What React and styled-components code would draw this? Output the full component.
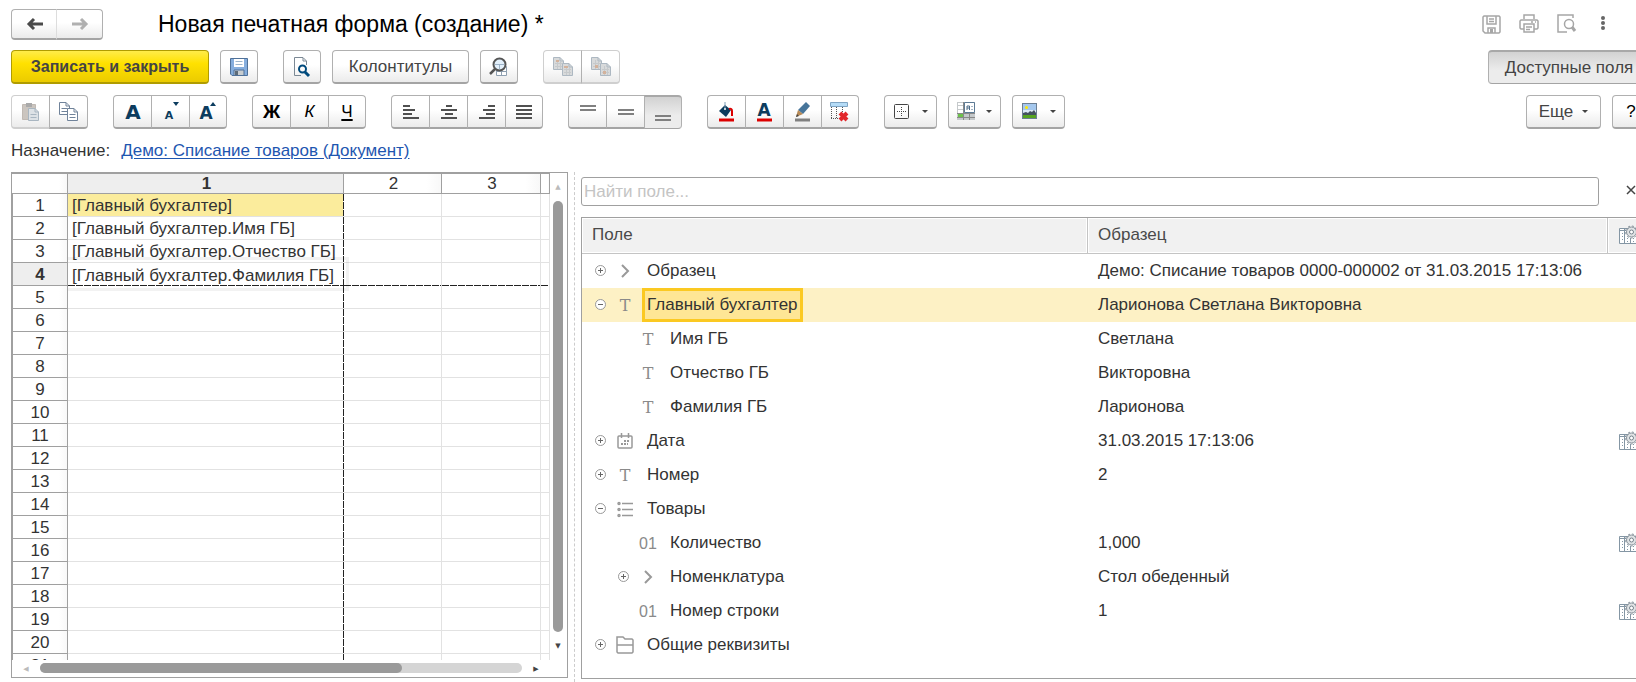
import React, { useState } from 'react';
import styled, { createGlobalStyle, css } from 'styled-components';

const GlobalStyle = createGlobalStyle`
  * { box-sizing: border-box; }
  html, body { margin: 0; background: #fff; overflow: hidden; }
  body, button, input, table {
    font-family: "Liberation Sans", Arial, sans-serif;
    font-size: 17px;
    color: #333;
  }
`;

const Page = styled.div`
  display: flex;
  flex-direction: column;
  width: calc(100% + 25px);
  height: 100vh;
  padding: 9px 11px 0;
`;

const Header = styled.header`
  display: flex;
  align-items: center;
  height: 30px;
  margin-bottom: 11px;
`;

const Title = styled.h1`
  flex: 1;
  margin: 0 0 0 55px;
  font-size: 23px;
  font-weight: 400;
  color: #000;
`;

const HeaderIcons = styled.div`
  display: flex;
  align-items: center;
  gap: 18px;
  margin-right: 38px;
`;

const IconButton = styled.button`
  display: flex;
  padding: 0;
  border: 0;
  background: none;
`;

const Toolbar = styled.div`
  display: flex;
  gap: 25px;
  height: 34px;
  margin-bottom: 11px;
`;

const Cluster = styled.div`
  display: flex;
  gap: 11px;
`;

const Spacer = styled.div`
  flex: 1;
`;

const Button = styled.button`
  display: flex;
  align-items: center;
  justify-content: center;
  gap: ${p => p.$gap || 0}px;
  width: ${p => p.$w || 38}px;
  height: 100%;
  padding: 0;
  border: 1px solid #b0b0b0;
  border-bottom: 2px solid #a4a4a4;
  border-radius: 4px;
  background: linear-gradient(#fff 45%, #ebebeb);
  color: #444;
  white-space: nowrap;

  ${p => p.$primary && css`
    border-color: #b09c00;
    background: linear-gradient(#ffec4a, #ffe100 40%, #ebcb00);
    font-size: 16px;
    font-weight: 700;
  `}

  ${p => p.$pressed && css`
    border-top: 2px solid #a8a8a8;
    border-bottom-width: 1px;
    background: linear-gradient(#d2d2d2, #ececec 60%);
  `}

  &:disabled {
    border-color: #cfcfcf;
  }
`;

const Group = styled.div`
  display: flex;

  ${Button} { width: 39px; border-radius: 0; }
  ${Button} + ${Button} { border-left: 1px solid #b0b0b0; margin-left: -1px; }
  ${Button}:first-child { border-radius: 4px 0 0 4px; }
  ${Button}:last-child { border-radius: 0 4px 4px 0; }
  ${Button}:nth-child(n+3):last-child { width: 38px; }
`;

const NavGroup = styled(Group)`
  height: 31px;
  ${Button}:first-child { width: 46px; border-right-width: 0; }
  ${Button}:last-child { width: 47px; border-left-color: #ddd; }
`;

const Letter = styled.span`
  font-size: ${p => p.$size || 19}px;
  line-height: 20px;
  color: ${p => p.$color || '#000'};
  font-weight: ${p => (p.$bold ? 700 : 400)};
  font-style: ${p => (p.$italic ? 'italic' : 'normal')};
  text-decoration: ${p => (p.$underline ? 'underline' : 'none')};
  text-decoration-thickness: 2px;
  text-underline-offset: 2px;
`;

const Purpose = styled.div`
  display: flex;
  gap: 11px;
  height: 32px;
  line-height: 22px;

  a { color: #1e56b0; text-underline-offset: 2px; }
`;

const Workspace = styled.main`
  display: flex;
  flex: 1;
  min-height: 0;
`;

const Sheet = styled.section`
  display: grid;
  grid-template: minmax(0, 1fr) 17px / minmax(0, 1fr) 17px;
  flex: 0 0 557px;
  margin-bottom: 4px;
  border: 1px solid #a0a0a0;
`;

const SheetView = styled.div`
  overflow: hidden;
`;

const SheetTable = styled.table`
  width: 100%;
  table-layout: fixed;
  border-collapse: separate;
  border-spacing: 0;
`;

const HeadCell = styled.th`
  height: ${p => (p.$top ? 21 : 23)}px;
  padding: 2px 0 0 ${p => (p.$top ? 2 : 1)}px;
  border-right: 1px solid #a0a0a0;
  border-bottom: 1px solid #a0a0a0;
  box-shadow: inset ${p => (p.$top ? '0 1px' : '1px 0')} 0 #a0a0a0;
  background: ${p => (p.$active ? '#eee' : 'linear-gradient(90deg, #fff 85%, #f8f8f8)')};
  font-weight: ${p => (p.$active ? 700 : 400)};
  line-height: ${p => (p.$top ? 18 : 20)}px;
  text-align: center;
`;

const dashes = dir => `repeating-linear-gradient(${dir}, #222 0 7px, #fff 7px 8px)`;

const Cell = styled.td`
  position: relative;
  height: 23px;
  padding: 2px 0 0 4px;
  border-right: 1px solid #e2e2e2;
  border-bottom: 1px solid #e2e2e2;
  line-height: 20px;
  white-space: nowrap;
  background-color: ${p => (p.$fill ? '#fbec9c' : '#fff')};
  background-repeat: no-repeat;

  ${p => p.$right && css`
    border-right: 0;
    background-image: ${dashes('180deg')};
    background-position: right top;
    background-size: 1px 100%;
  `}
  ${p => p.$bottom && css`
    border-bottom: 0;
    background-image: ${dashes('90deg')};
    background-position: left bottom;
    background-size: 100% 1px;
  `}
  ${p => p.$right && p.$bottom && css`
    background-image: ${dashes('180deg')}, ${dashes('90deg')};
    background-position: right top, left bottom;
    background-size: 1px 100%, 100% 1px;
  `}
`;

// halo round the current cell
const Halo = styled.span`
  position: absolute;
  z-index: 1;
  inset: -6px -5px -5px 0;
  border: 3px solid rgba(0, 0, 0, 0.05);
  border-left: 0;
  pointer-events: none;
`;

const VScroll = styled.div`
  display: flex;
  flex-direction: column;
  align-items: center;
  padding-right: 1px;
`;

const HScroll = styled.div`
  display: flex;
  align-items: center;
`;

const ScrollArrow = styled.button`
  flex: 0 0 28px;
  width: 16px;
  height: 28px;
  padding: 0;
  border: 0;
  background: none;
  font: 7px "DejaVu Sans", sans-serif;
  color: ${p => (p.$dim ? '#bbb' : '#444')};
`;

const HArrow = styled(ScrollArrow)`
  height: 17px;
`;

const VThumb = styled.div`
  flex: 1;
  width: 10px;
  border-radius: 5px;
  background: #9a9a9a;
`;

const HTrack = styled.div`
  flex: 1;
  height: 10px;
  margin-bottom: 2px;
  border-radius: 5px;
  background: #d5d5d5;
`;

const HThumb = styled.div`
  width: 75%;
  height: 100%;
  border-radius: 5px;
  background: #9a9a9a;
`;

const Splitter = styled.div`
  flex: 0 0 13px;
  margin-left: 6px;
  margin-right: -6px;
  border-left: 1px dashed #ccc;
`;

const Fields = styled.section`
  display: flex;
  flex-direction: column;
  flex: 1;
  min-width: 0;
  padding: 5px 0 3px;
`;

const SearchRow = styled.div`
  display: flex;
  align-items: center;
  height: 29px;
  margin-bottom: 11px;
`;

const SearchInput = styled.input`
  flex: 1;
  height: 29px;
  padding: 0 2px;
  border: 1px solid #a0a0a0;
  border-radius: 3px;
  outline: 0;

  &::placeholder { color: #c4c4c4; opacity: 1; }
`;

const ClearButton = styled(IconButton)`
  justify-content: center;
  width: 51px;
  padding: 0 0 4px 13px;
`;

const FieldFrame = styled.div`
  flex: 1;
  border: 1px solid #a0a0a0;
`;

const FieldTable = styled.table`
  width: 100%;
  table-layout: fixed;
  border-collapse: separate;
  border-spacing: 0;
`;

const FieldHead = styled.th`
  height: 36px;
  padding: 0 0 1px 10px;
  border: solid #c4c4c4;
  border-width: 0 1px 1px 0;
  box-shadow: inset 0 0 0 1px #fff;
  background: #f1f1f1;
  font-weight: 400;
  color: #4a4a4a;
  text-align: left;

  svg { display: block; }
`;

const FieldRow = styled.tr`
  background: ${p => (p.$selected ? '#fdf1c5' : 'none')};
`;

const FieldCell = styled.td`
  height: 34px;
  padding: 0 0 0 10px;
  white-space: nowrap;

  > svg { display: block; }
`;

const TreeCell = styled.div`
  display: flex;
  align-items: center;
  height: 34px;
  padding-left: ${p => 2 + p.$level * 23}px;
`;

const Expander = styled(IconButton)`
  flex: 0 0 12px;
  margin-right: 8px;
`;

const NoExpander = styled.span`
  flex: 0 0 20px;
`;

const KindIcon = styled.span`
  display: flex;
  justify-content: center;
  flex: 0 0 22px;
  margin-right: 6px;
  color: #8a8a8a;
`;

const KindText = styled.span`
  padding-top: 2px;
  font: ${p => (p.$serif ? '16px "DejaVu Serif", serif' : '16px "Liberation Sans Narrow", "Liberation Sans", sans-serif')};
  line-height: 20px;
`;

const FieldName = styled.span`
  display: flex;
  align-items: center;
  height: 34px;
  padding: 0 2px;
  border: 3px solid ${p => (p.$selected ? '#fbc922' : 'transparent')};
  background: ${p => (p.$selected ? '#fee695' : 'none')};
`;

/* ---- icons ---- */

const Svg = ({ w = 20, h = 20, children, ...rest }) => (
  <svg width={w} height={h} viewBox={`0 0 ${w} ${h}`} fill="none" overflow="visible" aria-hidden="true" {...rest}>{children}</svg>
);

const ArrowIcon = ({ color, right }) => (
  <Svg w={18} h={14} stroke={color} strokeWidth="3">
    {right ? <path d="M1 7H14M10 2L15 7L10 12" /> : <path d="M17 7H4M8 2L3 7L8 12" />}
  </Svg>
);

const FloppyIcon = () => (
  <Svg w={18} h={18}>
    <path d="M.5.5H17.5V17.5H2L.5 16Z" fill="#86aede" stroke="#4f7199" />
    <path d="M4 1H14V9H4Z" fill="#fff" />
    <path d="M5.500 3.500H12.500M5.500 6.500H12.500" stroke="#9db5cc" />
    <path d="M4 12H14V17.500H4Z" fill="#c8cdd0" stroke="#4f7199" />
    <path d="M5 13H8V17H5Z" fill="#5d6b78" />
  </Svg>
);

const PreviewIcon = () => (
  <Svg w={18} h={20}>
    <path d="M8 18.500H1.500V.500H10L13.500 4V8" stroke="#7b8894" />
    <path d="M10 1V4H13" stroke="#7b8894" />
    <circle cx="9.500" cy="12" r="3.500" stroke="#004a7c" strokeWidth="2" />
    <path d="M12 15L16 19" stroke="#004a7c" strokeWidth="3" />
  </Svg>
);

const FindTableIcon = () => (
  <Svg w={20} h={20}>
    <path d="M7.500 9.500H17.500V18.500H7.500ZM12.500 9V18M7 14.500H18" fill="#fff" stroke="#8fa0b1" />
    <circle cx="10.500" cy="7.500" r="6" fill="#e3f0fb" stroke="#555" strokeWidth="2" />
    <path d="M6 7.500H15M10.500 7V12" stroke="#9db3c8" />
    <path d="M6 12L1 17" stroke="#555" strokeWidth="2.500" />
  </Svg>
);

const Doc = ({ x, y, stroke, fill, lines = true }) => (
  <g transform={`translate(${x} ${y})`}>
    <path d="M.5.5H7L10.500 4V12.500H.5Z" fill={fill} stroke={stroke} />
    <path d="M7 .500V4H10.500" stroke={stroke} />
    {lines && <path d="M2.500 6.500H8.500M2.500 9.500H8.500" stroke={stroke} />}
  </g>
);

const PasteIcon = () => (
  <Svg w={18} h={20}>
    <path d="M.5 2.500H13.500V17.500H.5Z" fill="#cbc5bf" stroke="#c0b9b3" />
    <path d="M4 1H10V5H4Z" fill="#aaa" />
    <Doc x={6} y={6} stroke="#a9b6c1" fill="#dde2e6" />
  </Svg>
);

const CopyIcon = () => (
  <Svg w={20} h={20}>
    <Doc x={0} y={0} stroke="#70839a" fill="#fff" />
    <Doc x={8} y={6} stroke="#70839a" fill="#fff" />
  </Svg>
);

const CopyAreaIcon = ({ low }) => (
  <Svg w={20} h={20}>
    <Doc x={0} y={0} stroke="#adb8c2" fill="#d8dadb" lines={false} />
    <path d="M2 6.500H9M2 9.500H9M4.500 3V12M7.500 5V12" stroke="#c6c9cb" />
    <Doc x={9} y={6} stroke="#adb8c2" fill="#d8dadb" lines={false} />
    <path d="M11 12.500H18M11 15.500H18M13.500 9V18M16.500 11V18" stroke="#c6c9cb" />
    {low
      ? <path d="M4 8H7V11H4ZM12 14H15V17H12Z" fill="#d3b29c" />
      : <path d="M3 3H6V5H3ZM11 9H15V11H11Z" fill="#d3b29c" />}
  </Svg>
);

const AIcon = ({ size, mark }) => (
  <Svg w={18} h={20}>
    <text x={mark ? 7 : 9} y="17" textAnchor="middle" fontFamily="DejaVu Sans, sans-serif" fontWeight="700" fontSize={size} fill="#0c3c5e">A</text>
    {mark === 'down' && <path d="M11 0H17L14 4Z" fill="#0c3c5e" />}
    {mark === 'up' && <path d="M11 4H17L14 0Z" fill="#0c3c5e" />}
  </Svg>
);

const aligns = {
  left: 'M0 2H7M0 6H12M0 10H9M0 14H16',
  center: 'M5 2H11M0 6H16M4 10H12M0 14H16',
  right: 'M9 2H16M4 6H16M7 10H16M0 14H16',
  justify: 'M0 2H16M0 6H16M0 10H16M0 14H16',
};
const AlignIcon = ({ kind }) => <Svg w={16} h={16} stroke="#505050" strokeWidth="2"><path d={aligns[kind]} /></Svg>;

const VAlignIcon = ({ y }) => <Svg w={16} h={20} stroke="#808080" strokeWidth="2"><path d={`M0 ${y}H16M0 ${y + 4}H16`} /></Svg>;

const FillIcon = () => (
  <Svg w={18} h={20}>
    <path d="M1 9L7 3L13 8L8 15Z" fill="#0c3c5e" />
    <path d="M7 0V6" stroke="#7f9db5" strokeWidth="1" />
    <circle cx="7" cy="7" r="1" fill="#fff" />
    <path d="M11 7Q14 6 14 9V14" stroke="#dc0000" strokeWidth="2" />
    <path d="M1 18H16" stroke="#dc0000" strokeWidth="3" />
  </Svg>
);

const TextColorIcon = () => (
  <Svg w={18} h={20}>
    <text x="8" y="14" textAnchor="middle" fontFamily="DejaVu Sans, sans-serif" fontWeight="700" fontSize="17" fill="#0c3c5e">A</text>
    <path d="M1 18H16" stroke="#dc0000" strokeWidth="3" />
  </Svg>
);

const PencilIcon = () => (
  <Svg w={18} h={20}>
    <path d="M12 0L16 4L9 12L4 8Z" fill="#47759a" />
    <path d="M4 8L9 12L2 15Z" fill="#b88a56" />
    <path d="M3 12L5 14L2 15Z" fill="#444" />
    <path d="M1 18H16" stroke="#808080" strokeWidth="3" />
  </Svg>
);

const ClearFormatIcon = () => (
  <Svg w={20} h={20}>
    <path d="M.5.5H17.500V4.500H.5Z" fill="#b5dcf7" stroke="#7fa5c4" />
    <path d="M1.500 5V17M6.500 5V17M12.500 5V10M1 16.500H9" stroke="#555" strokeDasharray="1 1" />
    <path d="M10 11L17 18M17 11L10 18" stroke="#e2282c" strokeWidth="4" />
  </Svg>
);

const BordersIcon = () => (
  <Svg w={16} h={16}>
    <rect x=".5" y=".5" width="14" height="14" rx="1" stroke="#444" />
    <path d="M7.500 3V13M3 7.500H13" stroke="#444" strokeDasharray="1 1" />
  </Svg>
);

const NamesIcon = () => (
  <Svg w={20} h={19}>
    <path d="M0 0H18V18H0Z" fill="#c5c9cb" />
    <path d="M1 1H6V3H1ZM1 4H6V7H1ZM1 8H6V11H1Z" fill="#fff" />
    <path d="M1 12H6V15H1Z" fill="#6cc04a" />
    <path d="M0 11.500H18M6.500 0V18M12.500 11V18M0 15.500H18" stroke="#888" />
    <path d="M7.500.5H17.500V10.500H7.500Z" fill="#fff" stroke="#5c7a94" />
    <path d="M10 8V4H12.500V8M10 6H12M15 4V5M15 7V8" stroke="#4b6a86" />
  </Svg>
);

const ImageIcon = () => (
  <Svg w={16} h={17}>
    <rect x=".5" y=".5" width="14" height="15" fill="#a5c8ee" stroke="#6c7f93" />
    <path d="M1 7H14V12H1Z" fill="#dbe9f6" />
    <circle cx="4.500" cy="4.500" r="1.500" fill="#ffe900" />
    <path d="M1 12V10L4 9L6 10L8 8L10 9L12 7L14 10V12Z" fill="#44525f" />
    <path d="M1 12H14V15H1Z" fill="#56a420" />
  </Svg>
);

const Caret = () => <Svg w={6} h={4}><path d="M0 0H6L3 3Z" fill="#444" /></Svg>;

const GreyFloppyIcon = () => (
  <Svg w={19} h={19} stroke="#a6a6a6" strokeWidth="1.500">
    <path d="M1 2L2 1H17L18 2V17L17 18H3L1 16Z" />
    <path d="M5 1V9H14V1M7 4H12M7 6.500H12M6 18V13H13V18" />
    <path d="M9.500 14V18" strokeWidth="3" />
  </Svg>
);

const PrinterIcon = () => (
  <Svg w={20} h={20} stroke="#a6a6a6" strokeWidth="1.500">
    <path d="M5 5V1H15V5M5 15H2L1 14V7L2 6H18L19 7V14L18 15H15" />
    <path d="M5 10H15V18H5ZM7 13H13M7 15.500H11M12 8H14M16 8H17" />
  </Svg>
);

const GreyPreviewIcon = () => (
  <Svg w={19} h={20} stroke="#a6a6a6" strokeWidth="1.500">
    <path d="M10 18H1V1H16V4" />
    <circle cx="12" cy="10" r="4.500" />
    <path d="M15 13L18 17" strokeWidth="3" />
  </Svg>
);

const MoreIcon = () => (
  <Svg w={18} h={16} fill="#666">
    <circle cx="9" cy="2" r="2" fill="#666" /><circle cx="9" cy="7" r="2" fill="#666" /><circle cx="9" cy="12" r="2" fill="#666" />
  </Svg>
);

const ExpanderIcon = ({ open }) => (
  <Svg w={12} h={12} stroke="#999">
    <circle cx="6.500" cy="5.500" r="5" fill="#fff" />
    <path d={open ? 'M4 5.500H9' : 'M4 5.500H9M6.500 3V8'} stroke="#666" />
  </Svg>
);

const kinds = {
  ref: <Svg w={10} h={14} stroke="#999" strokeWidth="2"><path d="M2 1L8 7L2 13" /></Svg>,
  text: <KindText $serif>T</KindText>,
  number: <KindText>01</KindText>,
  date: (
    <Svg w={16} h={16} stroke="#999">
      <rect x="1" y="3" width="14" height="12" rx="1" strokeWidth="1.500" />
      <path d="M4.500 0V5M11.500 0V5" strokeWidth="1.500" />
      <path d="M7 8H13M4 11H11" strokeWidth="2" strokeDasharray="2 1" />
    </Svg>
  ),
  list: (
    <Svg w={16} h={17} stroke="#999" strokeWidth="1.500">
      <path d="M5 2.500H16M5 8.500H16M5 14.500H16" />
      <circle cx="2" cy="2.500" r="1" /><circle cx="2" cy="8.500" r="1" /><circle cx="2" cy="14.500" r="1" />
    </Svg>
  ),
  folder: (
    <Svg w={18} h={18} stroke="#999" strokeWidth="1.500">
      <path d="M1 15V1H7L9 3H16L17 4V16L16 17H2L1 16ZM1 9H17" />
    </Svg>
  ),
};

const FormatIcon = () => (
  <Svg w={24} h={20}>
    <path d="M1.500 3.500H21.500V18.500H1.500Z" fill="#fff" stroke="#8496a4" />
    <path d="M1 5.500H8M6.500 4V18M12.500 13V18" stroke="#8496a4" />
    <path d="M4.500 8V17M9.500 13V17M15.500 13V17" stroke="#8496a4" strokeDasharray="1 2" />
    <circle cx="13.500" cy="7" r="5" fill="#dfe2e4" stroke="#86919a" />
    <circle cx="13.500" cy="7" r="6" stroke="#86919a" strokeDasharray="2 2" />
    <circle cx="13.500" cy="7" r="2" fill="#fff" stroke="#76828c" />
  </Svg>
);

/* ---- data ---- */

const sheetRows = [
  '[Главный бухгалтер]',
  '[Главный бухгалтер.Имя ГБ]',
  '[Главный бухгалтер.Отчество ГБ]',
  '[Главный бухгалтер.Фамилия ГБ]',
];

const fields = [
  { name: 'Образец', kind: 'ref', node: 'closed', value: 'Демо: Списание товаров 0000-000002 от 31.03.2015 17:13:06' },
  { name: 'Главный бухгалтер', kind: 'text', node: 'open', value: 'Ларионова Светлана Викторовна' },
  { name: 'Имя ГБ', kind: 'text', level: 1, value: 'Светлана' },
  { name: 'Отчество ГБ', kind: 'text', level: 1, value: 'Викторовна' },
  { name: 'Фамилия ГБ', kind: 'text', level: 1, value: 'Ларионова' },
  { name: 'Дата', kind: 'date', node: 'closed', value: '31.03.2015 17:13:06', format: true },
  { name: 'Номер', kind: 'text', node: 'closed', value: '2' },
  { name: 'Товары', kind: 'list', node: 'open', value: '' },
  { name: 'Количество', kind: 'number', level: 1, value: '1,000', format: true },
  { name: 'Номенклатура', kind: 'ref', level: 1, node: 'closed', value: 'Стол обеденный' },
  { name: 'Номер строки', kind: 'number', level: 1, value: '1', format: true },
  { name: 'Общие реквизиты', kind: 'folder', node: 'closed', value: '' },
];

function MainToolbar() {
  return (
    <Toolbar>
      <Cluster>
        <Button $primary $w={198}>Записать и закрыть</Button>
        <Button aria-label="Записать"><FloppyIcon /></Button>
      </Cluster>
      <Cluster>
        <Button aria-label="Просмотр"><PreviewIcon /></Button>
        <Button $w={137}>Колонтитулы</Button>
        <Button aria-label="Найти"><FindTableIcon /></Button>
      </Cluster>
      <Group>
        <Button disabled aria-label="Копировать область"><CopyAreaIcon /></Button>
        <Button disabled aria-label="Вставить область"><CopyAreaIcon low /></Button>
      </Group>
      <Spacer />
      <Button $pressed $w={162}>Доступные поля</Button>
    </Toolbar>
  );
}

function FormatToolbar() {
  return (
    <Toolbar>
      <Group>
        <Button disabled aria-label="Вставить"><PasteIcon /></Button>
        <Button aria-label="Копировать"><CopyIcon /></Button>
      </Group>
      <Group>
        <Button aria-label="Шрифт"><AIcon size={20} /></Button>
        <Button aria-label="Уменьшить шрифт"><AIcon size={11} mark="down" /></Button>
        <Button aria-label="Увеличить шрифт"><AIcon size={17} mark="up" /></Button>
      </Group>
      <Group>
        <Button aria-label="Жирный"><Letter $bold>Ж</Letter></Button>
        <Button aria-label="Курсив"><Letter $size={17} $italic>К</Letter></Button>
        <Button aria-label="Подчеркнутый"><Letter $size={17} $underline>Ч</Letter></Button>
      </Group>
      <Group>
        {Object.keys(aligns).map(kind => (
          <Button key={kind} aria-label={kind}><AlignIcon kind={kind} /></Button>
        ))}
      </Group>
      <Group>
        <Button aria-label="Сверху"><VAlignIcon y={4} /></Button>
        <Button aria-label="По середине"><VAlignIcon y={8} /></Button>
        <Button $pressed aria-label="Снизу"><VAlignIcon y={13} /></Button>
      </Group>
      <Group>
        <Button aria-label="Цвет фона"><FillIcon /></Button>
        <Button aria-label="Цвет текста"><TextColorIcon /></Button>
        <Button aria-label="Цвет рамки"><PencilIcon /></Button>
        <Button aria-label="Очистить оформление"><ClearFormatIcon /></Button>
      </Group>
      <Cluster>
        <Button $w={53} $gap={12} aria-label="Границы"><BordersIcon /><Caret /></Button>
        <Button $w={53} $gap={9} aria-label="Имена"><NamesIcon /><Caret /></Button>
        <Button $w={53} $gap={12} aria-label="Картинка"><ImageIcon /><Caret /></Button>
      </Cluster>
      <Spacer />
      <Cluster>
        <Button $w={75} $gap={9}><span>Еще</span><Caret /></Button>
        <Button $w={38}><Letter $size={17}>?</Letter></Button>
      </Cluster>
    </Toolbar>
  );
}

function Spreadsheet() {
  const rows = Array.from({ length: 21 }, (_, i) => i + 1);
  return (
    <Sheet>
      <SheetView>
        <SheetTable>
          <colgroup>
            <col width="56" /><col width="276" /><col width="98" /><col width="99" /><col />
          </colgroup>
          <thead>
            <tr>
              <HeadCell $top />
              <HeadCell $top $active>1</HeadCell>
              <HeadCell $top>2</HeadCell>
              <HeadCell $top>3</HeadCell>
              <HeadCell $top />
            </tr>
          </thead>
          <tbody>
            {rows.map(n => (
              <tr key={n}>
                <HeadCell $active={n === 4}>{n}</HeadCell>
                <Cell $right $fill={n === 1} $bottom={n === 4}>
                  {sheetRows[n - 1]}
                  {n === 4 && <Halo />}
                </Cell>
                <Cell $bottom={n === 4} />
                <Cell $bottom={n === 4} />
                <Cell $bottom={n === 4} />
              </tr>
            ))}
          </tbody>
        </SheetTable>
      </SheetView>
      <VScroll>
        <ScrollArrow $dim aria-label="Вверх">▲</ScrollArrow>
        <VThumb />
        <ScrollArrow aria-label="Вниз">▼</ScrollArrow>
      </VScroll>
      <HScroll>
        <HArrow $dim aria-label="Влево">◀</HArrow>
        <HTrack><HThumb /></HTrack>
        <HArrow aria-label="Вправо">▶</HArrow>
      </HScroll>
    </Sheet>
  );
}

function FieldsPanel() {
  const [query, setQuery] = useState('');
  const [selected, setSelected] = useState(1);

  return (
    <Fields>
      <SearchRow>
        <SearchInput
          aria-label="Найти поле"
          placeholder="Найти поле..."
          value={query}
          onChange={e => setQuery(e.target.value)}
        />
        <ClearButton aria-label="Очистить" onClick={() => setQuery('')}>
          <Svg w={10} h={10} stroke="#444" strokeWidth="1.500"><path d="M1 1L9 9M9 1L1 9" /></Svg>
        </ClearButton>
      </SearchRow>
      <FieldFrame>
        <FieldTable>
          <colgroup>
            <col /><col width="520" /><col width="41" />
          </colgroup>
          <thead>
            <tr>
              <FieldHead>Поле</FieldHead>
              <FieldHead>Образец</FieldHead>
              <FieldHead aria-label="Формат"><FormatIcon /></FieldHead>
            </tr>
          </thead>
          <tbody>
            {fields.map((f, i) => (
              <FieldRow key={f.name} $selected={i === selected} onClick={() => setSelected(i)}>
                <FieldCell>
                  <TreeCell $level={f.level || 0}>
                    {f.node
                      ? <Expander aria-label={f.name}><ExpanderIcon open={f.node === 'open'} /></Expander>
                      : <NoExpander />}
                    <KindIcon>{kinds[f.kind]}</KindIcon>
                    <FieldName $selected={i === selected}>{f.name}</FieldName>
                  </TreeCell>
                </FieldCell>
                <FieldCell>{f.value}</FieldCell>
                <FieldCell>{f.format && <FormatIcon />}</FieldCell>
              </FieldRow>
            ))}
          </tbody>
        </FieldTable>
      </FieldFrame>
    </Fields>
  );
}

export default function App() {
  return (
    <>
      <GlobalStyle />
      <Page>
        <Header>
          <NavGroup>
            <Button aria-label="Назад"><ArrowIcon color="#4a4a4a" /></Button>
            <Button aria-label="Вперед"><ArrowIcon color="#b0b0b0" right /></Button>
          </NavGroup>
          <Title>Новая печатная форма (создание) *</Title>
          <HeaderIcons>
            <IconButton aria-label="Сохранить"><GreyFloppyIcon /></IconButton>
            <IconButton aria-label="Печать"><PrinterIcon /></IconButton>
            <IconButton aria-label="Предварительный просмотр"><GreyPreviewIcon /></IconButton>
            <IconButton aria-label="Меню"><MoreIcon /></IconButton>
          </HeaderIcons>
        </Header>
        <MainToolbar />
        <FormatToolbar />
        <Purpose>
          <span>Назначение:</span>
          <a href="#purpose">Демо: Списание товаров (Документ)</a>
        </Purpose>
        <Workspace>
          <Spreadsheet />
          <Splitter />
          <FieldsPanel />
        </Workspace>
      </Page>
    </>
  );
}
